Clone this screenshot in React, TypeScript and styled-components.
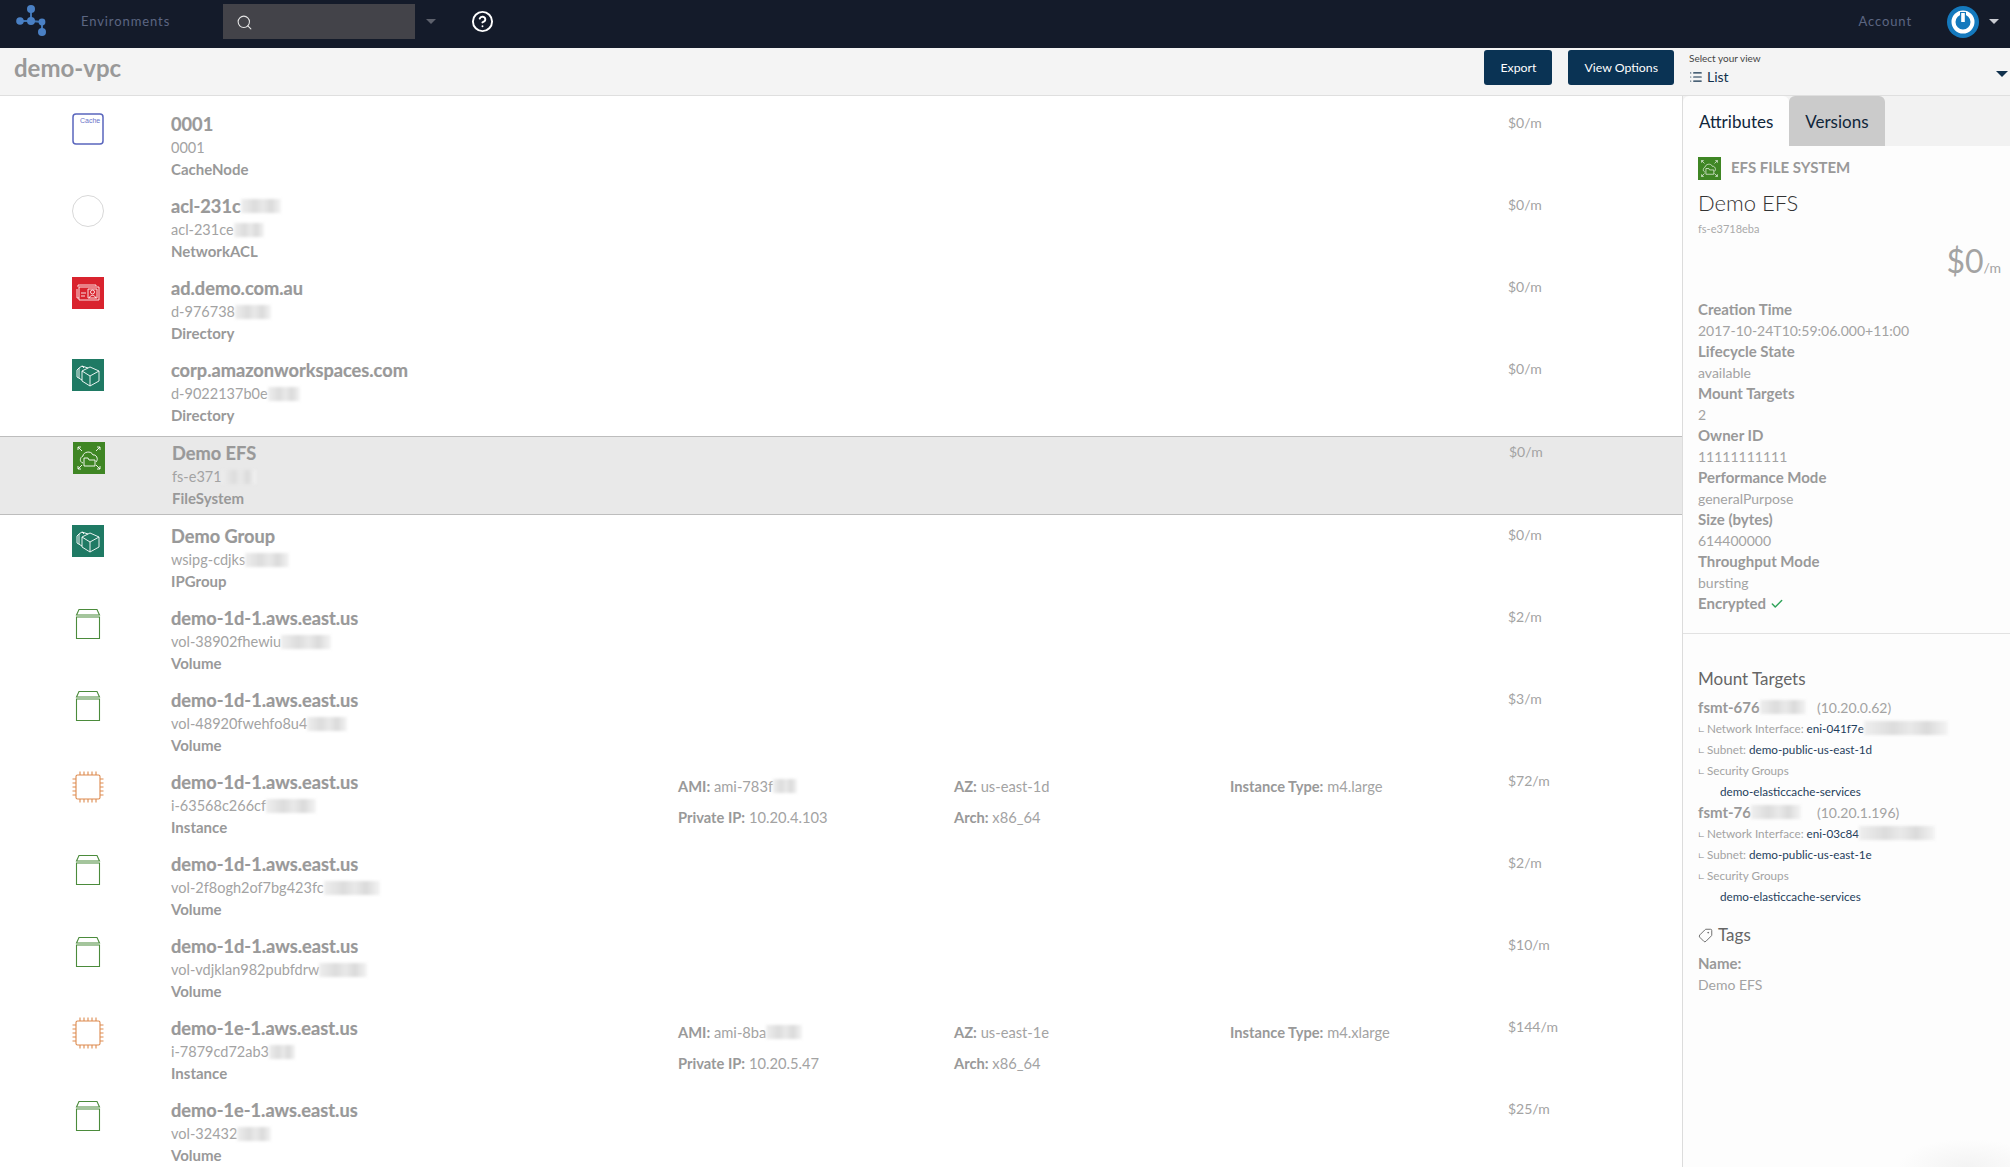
import React from "react";
import styled, { createGlobalStyle } from "styled-components";
import { Search, CircleHelp, Tag, Check, List as ListIcon } from "lucide-react";

const GlobalStyle = createGlobalStyle`
  html, body {
    margin: 0;
    padding: 0;
    background: #fff;
    font-family: Lato, "Open Sans", sans-serif;
  }
`;

const Page = styled.div`
  width: 2010px;
  height: 1167px;
  overflow: hidden;
  display: flex;
  flex-direction: column;
`;

const NavBar = styled.header`
  height: 48px;
  flex: none;
  box-sizing: border-box;
  display: flex;
  align-items: center;
  background: #141b2a;
  padding: 0 11px 6px 16px;
`;

const NavLink = styled.span`
  font-size: 13px;
  letter-spacing: 0.9px;
  color: #5c6682;
`;

const BrandLink = styled(NavLink)`
  margin-left: 34px;
`;

const SearchBox = styled.div`
  width: 192px;
  height: 35px;
  margin: 0 0 0 53px;
  padding: 3px 0 0 13px;
  box-sizing: border-box;
  display: flex;
  align-items: center;
  background: #434349;
  color: #e6e6e6;
`;

const Caret = styled.span<{ $color?: string; $size?: number }>`
  width: 0;
  height: 0;
  flex: none;
  border-left: ${({ $size }) => $size ?? 5}px solid transparent;
  border-right: ${({ $size }) => $size ?? 5}px solid transparent;
  border-top: ${({ $size }) => $size ?? 5}px solid ${({ $color }) => $color ?? "#5d616c"};
`;

const SearchCaret = styled(Caret)`
  margin-left: 11px;
`;

const ViewCaret = styled(Caret)`
  margin-bottom: 8px;
`;

const HelpSlot = styled.span`
  margin-left: 35px;
  display: flex;
  color: #fff;
`;

const NavRight = styled.div`
  margin-left: auto;
  display: flex;
  align-items: center;
`;

const Avatar = styled.span`
  width: 32px;
  height: 32px;
  margin: 2px 10px 0 35px;
  border-radius: 50%;
  display: flex;
`;

const SubHeader = styled.div`
  height: 48px;
  flex: none;
  box-sizing: border-box;
  display: flex;
  align-items: center;
  background: #f4f4f4;
  border-bottom: 1px solid #dfdfdf;
  padding: 0 2px 8px 14px;
`;

const PageTitle = styled.h1`
  margin: 0;
  font-size: 24px;
  font-weight: 700;
  color: #999;
`;

const ToolButton = styled.button`
  height: 35px;
  padding: 0 16px;
  border: none;
  border-radius: 3px;
  background: #0a3354;
  color: #fff;
  font-family: inherit;
  font-size: 12.3px;
`;

const SubActions = styled.div`
  margin-left: auto;
  display: flex;
  gap: 16px;
  align-items: center;
`;

const ViewSelect = styled.div`
  width: 319px;
  margin: 6px 0 0 -1px;
  display: flex;
  justify-content: space-between;
  align-items: flex-end;
  padding-bottom: 4px;
  box-sizing: border-box;
`;

const ViewLabel = styled.div`
  font-size: 10px;
  color: #444;
  margin-bottom: 4px;
`;

const ViewValue = styled.div`
  display: flex;
  align-items: center;
  gap: 4px;
  font-size: 14px;
  color: #10304c;
`;

const Body = styled.div`
  flex: 1;
  min-height: 0;
  display: flex;
`;

const ResourceList = styled.main`
  width: 1682px;
  flex: none;
  padding-top: 12px;
  box-sizing: border-box;
`;

const Row = styled.div<{ $selected?: boolean }>`
  height: ${({ $selected }) => ($selected ? 79 : 78)}px;
  margin-bottom: ${({ $selected }) => ($selected ? 5 : 4)}px;
  padding: 5px 0 0 72px;
  box-sizing: border-box;
  display: flex;
  align-items: flex-start;
  ${({ $selected }) =>
    $selected &&
    `
    background: #e9e9e9;
    border-top: 1px solid #bdbdbd;
    border-bottom: 1px solid #bdbdbd;
    padding-left: 73px;
  `}
`;

const IconBox = styled.div`
  width: 32px;
  height: 32px;
  flex: none;
  display: flex;
`;

const RowText = styled.div`
  width: 507px;
  margin-left: 67px;
  flex: none;
`;

const RowTitle = styled.div`
  font-size: 18.2px;
  font-weight: 700;
  line-height: 24px;
  margin-top: -1px;
  color: #999;
  -webkit-text-stroke: 0.2px #999;
  white-space: nowrap;
  display: flex;
  align-items: center;
`;

const RowId = styled.div`
  margin-top: 1px;
  font-size: 14.5px;
  line-height: 22px;
  color: #a3a3a3;
  white-space: nowrap;
  display: flex;
  align-items: center;
`;

const RowType = styled.div`
  font-size: 15px;
  font-weight: 700;
  line-height: 20px;
  color: #999;
`;

const Blurred = styled.span<{ $width: number; $height?: number }>`
  display: inline-block;
  width: ${({ $width }) => $width}px;
  height: ${({ $height }) => $height ?? 14}px;
  filter: blur(1.5px);
  background: linear-gradient(90deg, #eeeeee, #dcdcdc 35%, #e9e9e9 55%, #dadada 75%, #f4f4f4);
`;

const Details = styled.div`
  width: 830px;
  margin-top: -1px;
  flex: none;
  display: grid;
  grid-template-columns: 276px 276px 278px;
  grid-auto-rows: 31px;
  font-size: 14.7px;
  color: #a3a3a3;
`;

const DetailKey = styled.b`
  color: #999;
`;

const DetailItem = styled.div`
  white-space: nowrap;
  display: flex;
  align-items: center;
`;

const Price = styled.div`
  margin-top: 1px;
  font-size: 14px;
  color: #a3a3a3;
`;

const SidePanel = styled.aside`
  flex: 1;
  min-width: 0;
  border-left: 1px solid #dcdcdc;
  background: radial-gradient(ellipse 70px 28px at 285px 100%, #f3f3f3, #fdfdfd);
`;

const Tabs = styled.div`
  height: 50px;
  display: flex;
  background: #f2f2f2;
`;

const TabItem = styled.div<{ $active?: boolean }>`
  padding: 0 16px;
  display: flex;
  align-items: center;
  font-size: 17px;
  color: #10263a;
  background: ${({ $active }) => ($active ? "#fdfdfd" : "#cbcbcb")};
  border-radius: 6px 6px 0 0;
`;

const PanelSection = styled.section<{ $top?: number }>`
  padding: ${({ $top }) => $top ?? 11}px 9px 0 15px;
`;

const KindLine = styled.div`
  display: flex;
  align-items: center;
  gap: 10px;
  height: 23px;
`;

const KindText = styled.span`
  margin-top: -3px;
  font-size: 15px;
  font-weight: 700;
  color: #999;
`;

const ResourceName = styled.div`
  margin-top: 8px;
  font-size: 22px;
  line-height: 30px;
  font-weight: 300;
  color: #333;
`;

const ResourceId = styled.div`
  margin-top: 3px;
  font-size: 11px;
  line-height: 16px;
  color: #aaa;
`;

const Cost = styled.div`
  margin-top: 3px;
  text-align: right;
  font-size: 32px;
  line-height: 42px;
  color: #a3a3a3;
`;

const CostUnit = styled.span`
  font-size: 14px;
`;

const AttrList = styled.div`
  margin-top: 10px;
  line-height: 21px;
  padding-bottom: 19px;
`;

const AttrKey = styled.div`
  font-size: 15px;
  line-height: 21px;
  font-weight: 700;
  color: #999;
  display: flex;
  align-items: center;
  gap: 4px;
`;

const AttrValue = styled.div`
  font-size: 14px;
  line-height: 21px;
  color: #a3a3a3;
`;

const Divider = styled.hr`
  margin: 0;
  border: none;
  border-top: 1px solid #e2e2e2;
`;

const SectionTitle = styled.h3`
  margin: 0 0 5.5px;
  font-size: 17px;
  line-height: 24px;
  font-weight: 400;
  color: #666;
  display: flex;
  align-items: center;
  gap: 5px;
`;

const TargetHead = styled.div`
  display: flex;
  align-items: center;
  font-size: 14px;
  line-height: 21px;
  color: #a3a3a3;
`;

const TargetName = styled.b`
  color: #999;
  font-size: 15px;
  display: flex;
  align-items: center;
  width: 119px;
`;

const SubLine = styled.div<{ $indent?: boolean }>`
  font-size: 11.7px;
  line-height: 21px;
  color: #a3a3a3;
  white-space: nowrap;
  display: flex;
  align-items: center;
  gap: 3px;
  padding-left: ${({ $indent }) => ($indent ? 22 : 0)}px;
`;

const SubLink = styled.span`
  color: #1d3d5c;
  display: flex;
  align-items: center;
`;

const Corner = styled.span`
  font-size: 10px;
  color: #888;
`;

const TagBlock = styled.div`
  margin-top: 16.5px;
`;

const FlippedTag = styled(Tag)`
  transform: scaleX(-1);
`;

const Logo = () => (
  <svg width="31" height="32" viewBox="0 0 31 32">
    <g stroke="#3f74b3" strokeWidth="2" fill="none">
      <path d="M15 4v12M4 16h11l11 1v10" />
    </g>
    <g fill="#4a80c4">
      <circle cx="15" cy="4" r="4" />
      <circle cx="4" cy="16" r="3.8" />
      <circle cx="15" cy="16" r="4" />
      <circle cx="26" cy="17" r="3.4" />
      <circle cx="26" cy="27" r="4" />
    </g>
  </svg>
);

const PowerAvatar = () => (
  <svg width="32" height="32" viewBox="0 0 32 32">
    <circle cx="16" cy="16" r="16" fill="#1479bd" />
    <circle cx="16" cy="16" r="9.5" fill="none" stroke="#fff" strokeWidth="4" />
    <rect x="13" y="6" width="6" height="9" fill="#1479bd" />
    <rect x="14.2" y="7" width="3.6" height="9" fill="#fff" />
  </svg>
);

const CacheIcon = () => (
  <svg width="32" height="32" viewBox="0 0 32 32">
    <rect x="1" y="1" width="30" height="30" rx="3" fill="#fff" stroke="#5a66bd" strokeWidth="1.5" />
    <text x="8" y="10" fontSize="7" fontFamily="Liberation Sans, sans-serif" fill="#6a74c9">Cache</text>
  </svg>
);

const AclIcon = () => (
  <svg width="32" height="32" viewBox="0 0 32 32">
    <circle cx="16" cy="16" r="15.5" fill="#fff" stroke="#d8d8d8" />
  </svg>
);

const DirectoryIcon = () => (
  <svg width="32" height="32" viewBox="0 0 32 32">
    <rect width="32" height="32" fill="#d9232e" />
    <g fill="none" stroke="#fff" strokeWidth="0.9" opacity="0.95">
      <path d="M6 10V8h18v1" />
      <path d="M5 12v9h2" />
      <path d="M7 10h20v13H7z" />
      <path d="M16 12h9v9h-9z" />
      <circle cx="20.5" cy="15" r="2" />
      <path d="M17.5 21c0-3.5 6-3.5 6 0M9 16h5M9 19h4" />
    </g>
  </svg>
);

const WorkspacesIcon = () => (
  <svg width="32" height="32" viewBox="0 0 32 32">
    <rect width="32" height="32" fill="#1f7a64" />
    <g fill="none" stroke="#fff" strokeWidth="0.9">
      <path d="M18 8l9 4v10l-9 5-8-5V12z" />
      <path d="M10 12l8 5 9-5M18 17v10" />
      <path d="M12 9l-2-2-3 2-2 2v7l5 3M7 9v10M10 7l6 2" />
    </g>
  </svg>
);

const EfsIcon = ({ size = 32 }: { size?: number }) => (
  <svg width={size} height={size} viewBox="0 0 32 32">
    <rect width="32" height="32" fill="#3f8624" />
    <g fill="none" stroke="#fff" strokeWidth="0.9">
      <path d="M5 5l4 4M5 5h3M5 5v3M27 5l-4 4M27 5h-3M27 5v3M5 27l4-4M5 27h3M5 27v-3M27 27l-4-4M27 27h-3M27 27v-3" />
      <path d="M10 21c-4-1-3-6 0-7 0-4 8-6 10-1 3-1 6 4 3 7" />
      <path d="M11 16h4l1 2h6v6H11z" />
    </g>
  </svg>
);

const VolumeIcon = () => (
  <svg width="32" height="32" viewBox="0 0 32 32">
    <g fill="none" stroke="#4b8b3b" strokeWidth="1.1">
      <path d="M4.5 10h23v21.5h-23z" />
      <path d="M4.5 8L7 2.5h18L27.5 8z" />
    </g>
  </svg>
);

const InstanceIcon = () => (
  <svg width="32" height="32" viewBox="0 0 32 32">
    <g fill="none" stroke="#dd8a4e" strokeWidth="1.1">
      <rect x="4" y="4" width="24" height="24" rx="1.5" />
      <path d="M8 0.5v3.5M12 0.5v3.5M16 0.5v3.5M20 0.5v3.5M24 0.5v3.5M8 28v3.5M12 28v3.5M16 28v3.5M20 28v3.5M24 28v3.5M0.5 8H4M0.5 12H4M0.5 16H4M0.5 20H4M0.5 24H4M28 8h3.5M28 12h3.5M28 16h3.5M28 20h3.5M28 24h3.5" />
    </g>
  </svg>
);

type Resource = {
  icon: React.ReactNode;
  title: string;
  titleBlur?: number;
  id: string;
  idBlur: number;
  type: string;
  price: string;
  selected?: boolean;
  details?: { ami: string; amiBlur: number; ip: string; az: string; instanceType: string };
};

const resources: Resource[] = [
  { icon: <CacheIcon />, title: "0001", id: "0001", idBlur: 0, type: "CacheNode", price: "$0/m" },
  { icon: <AclIcon />, title: "acl-231c", titleBlur: 40, id: "acl-231ce", idBlur: 30, type: "NetworkACL", price: "$0/m" },
  { icon: <DirectoryIcon />, title: "ad.demo.com.au", id: "d-976738", idBlur: 36, type: "Directory", price: "$0/m" },
  { icon: <WorkspacesIcon />, title: "corp.amazonworkspaces.com", id: "d-9022137b0e", idBlur: 32, type: "Directory", price: "$0/m" },
  { icon: <EfsIcon />, title: "Demo EFS", id: "fs-e371", idBlur: 34, type: "FileSystem", price: "$0/m", selected: true },
  { icon: <WorkspacesIcon />, title: "Demo Group", id: "wsipg-cdjks", idBlur: 44, type: "IPGroup", price: "$0/m" },
  { icon: <VolumeIcon />, title: "demo-1d-1.aws.east.us", id: "vol-38902fhewiu", idBlur: 50, type: "Volume", price: "$2/m" },
  { icon: <VolumeIcon />, title: "demo-1d-1.aws.east.us", id: "vol-48920fwehfo8u4", idBlur: 40, type: "Volume", price: "$3/m" },
  {
    icon: <InstanceIcon />, title: "demo-1d-1.aws.east.us", id: "i-63568c266cf", idBlur: 50, type: "Instance", price: "$72/m",
    details: { ami: "ami-783f", amiBlur: 24, ip: "10.20.4.103", az: "us-east-1d", instanceType: "m4.large" },
  },
  { icon: <VolumeIcon />, title: "demo-1d-1.aws.east.us", id: "vol-2f8ogh2of7bg423fc", idBlur: 56, type: "Volume", price: "$2/m" },
  { icon: <VolumeIcon />, title: "demo-1d-1.aws.east.us", id: "vol-vdjklan982pubfdrw", idBlur: 48, type: "Volume", price: "$10/m" },
  {
    icon: <InstanceIcon />, title: "demo-1e-1.aws.east.us", id: "i-7879cd72ab3", idBlur: 26, type: "Instance", price: "$144/m",
    details: { ami: "ami-8ba", amiBlur: 36, ip: "10.20.5.47", az: "us-east-1e", instanceType: "m4.xlarge" },
  },
  { icon: <VolumeIcon />, title: "demo-1e-1.aws.east.us", id: "vol-32432", idBlur: 34, type: "Volume", price: "$25/m" },
];

const attributes = [
  ["Creation Time", "2017-10-24T10:59:06.000+11:00"],
  ["Lifecycle State", "available"],
  ["Mount Targets", "2"],
  ["Owner ID", "11111111111"],
  ["Performance Mode", "generalPurpose"],
  ["Size (bytes)", "614400000"],
  ["Throughput Mode", "bursting"],
];

const targets = [
  { name: "fsmt-676", nameBlur: 46, ip: "(10.20.0.62)", eni: "eni-041f7e", eniBlur: 84, subnet: "demo-public-us-east-1d" },
  { name: "fsmt-76", nameBlur: 50, ip: "(10.20.1.196)", eni: "eni-03c84", eniBlur: 76, subnet: "demo-public-us-east-1e" },
];

const App = () => {
  return (
    <Page>
      <GlobalStyle />
      <NavBar>
        <Logo />
        <BrandLink>Environments</BrandLink>
        <SearchBox>
          <Search size={17} strokeWidth={1.5} />
        </SearchBox>
        <SearchCaret />
        <HelpSlot>
          <CircleHelp size={23} strokeWidth={2} />
        </HelpSlot>
        <NavRight>
          <NavLink>Account</NavLink>
          <Avatar>
            <PowerAvatar />
          </Avatar>
          <Caret $color="#c9ccd2" />
        </NavRight>
      </NavBar>
      <SubHeader>
        <PageTitle>demo-vpc</PageTitle>
        <SubActions>
          <ToolButton>Export</ToolButton>
          <ToolButton>View Options</ToolButton>
          <ViewSelect>
            <div>
              <ViewLabel>Select your view</ViewLabel>
              <ViewValue>
                <ListIcon size={14} strokeWidth={2} />
                List
              </ViewValue>
            </div>
            <ViewCaret $color="#10304c" $size={6} />
          </ViewSelect>
        </SubActions>
      </SubHeader>
      <Body>
        <ResourceList>
          {resources.map((item, index) => (
            <Row key={index} $selected={item.selected}>
              <IconBox>{item.icon}</IconBox>
              <RowText>
                <RowTitle>
                  {item.title}
                  {item.titleBlur ? <Blurred $width={item.titleBlur} /> : null}
                </RowTitle>
                <RowId>
                  {item.id}
                  {item.idBlur > 0 && <Blurred $width={item.idBlur} />}
                </RowId>
                <RowType>{item.type}</RowType>
              </RowText>
              <Details>
                {item.details && (
                  <>
                    <DetailItem>
                      <DetailKey>AMI:</DetailKey>&nbsp;{item.details.ami}
                      <Blurred $width={item.details.amiBlur} />
                    </DetailItem>
                    <DetailItem>
                      <DetailKey>AZ:</DetailKey>&nbsp;{item.details.az}
                    </DetailItem>
                    <DetailItem>
                      <DetailKey>Instance Type:</DetailKey>&nbsp;{item.details.instanceType}
                    </DetailItem>
                    <DetailItem>
                      <DetailKey>Private IP:</DetailKey>&nbsp;{item.details.ip}
                    </DetailItem>
                    <DetailItem>
                      <DetailKey>Arch:</DetailKey>&nbsp;x86_64
                    </DetailItem>
                  </>
                )}
              </Details>
              <Price>{item.price}</Price>
            </Row>
          ))}
        </ResourceList>
        <SidePanel>
          <Tabs>
            <TabItem $active>Attributes</TabItem>
            <TabItem>Versions</TabItem>
          </Tabs>
          <PanelSection>
            <KindLine>
              <EfsIcon size={23} />
              <KindText>EFS FILE SYSTEM</KindText>
            </KindLine>
            <ResourceName>Demo EFS</ResourceName>
            <ResourceId>fs-e3718eba</ResourceId>
            <Cost>
              $0<CostUnit>/m</CostUnit>
            </Cost>
            <AttrList>
              {attributes.map(([key, value]) => (
                <React.Fragment key={key}>
                  <AttrKey>{key}</AttrKey>
                  <AttrValue>{value}</AttrValue>
                </React.Fragment>
              ))}
              <AttrKey>
                Encrypted <Check size={14} strokeWidth={2.5} color="#2fa35a" />
              </AttrKey>
            </AttrList>
          </PanelSection>
          <Divider />
          <PanelSection $top={33}>
            <SectionTitle>Mount Targets</SectionTitle>
            {targets.map((target) => (
              <React.Fragment key={target.name}>
                <TargetHead>
                  <TargetName>
                    {target.name}
                    <Blurred $width={target.nameBlur} />
                  </TargetName>
                  {target.ip}
                </TargetHead>
                <SubLine>
                  <Corner>∟</Corner> Network Interface:
                  <SubLink>
                    {target.eni}
                    <Blurred $width={target.eniBlur} />
                  </SubLink>
                </SubLine>
                <SubLine>
                  <Corner>∟</Corner> Subnet: <SubLink>{target.subnet}</SubLink>
                </SubLine>
                <SubLine>
                  <Corner>∟</Corner> Security Groups
                </SubLine>
                <SubLine $indent>
                  <SubLink>demo-elasticcache-services</SubLink>
                </SubLine>
              </React.Fragment>
            ))}
            <TagBlock>
              <SectionTitle>
                <FlippedTag size={15} strokeWidth={1.5} />
                Tags
              </SectionTitle>
              <AttrKey>Name:</AttrKey>
              <AttrValue>Demo EFS</AttrValue>
            </TagBlock>
          </PanelSection>
        </SidePanel>
      </Body>
    </Page>
  );
};

export default App;
